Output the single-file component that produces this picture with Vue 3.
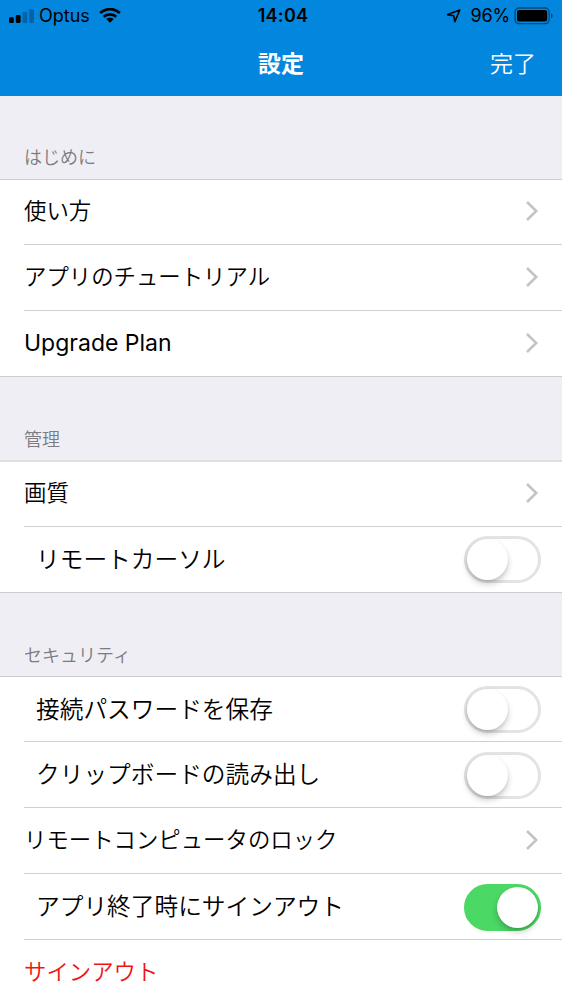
<script setup>
const groups = [
  {
    id: 'start',
    title: 'はじめに',
    rows: [
      { label: '使い方', type: 'link' },
      { label: 'アプリのチュートリアル', type: 'link' },
      { label: 'Upgrade Plan', type: 'link', latin: true },
    ],
  },
  {
    id: 'manage',
    title: '管理',
    rows: [
      { label: '画質', type: 'link' },
      { label: 'リモートカーソル', type: 'toggle', on: false },
    ],
  },
  {
    id: 'security',
    title: 'セキュリティ',
    rows: [
      { label: '接続パスワードを保存', type: 'toggle', on: false },
      { label: 'クリップボードの読み出し', type: 'toggle', on: false },
      { label: 'リモートコンピュータのロック', type: 'link' },
      { label: 'アプリ終了時にサインアウト', type: 'toggle', on: true },
      { label: 'サインアウト', type: 'danger' },
    ],
  },
]
</script>

<template>
  <div class="screen">
    <header class="header">
      <div class="status">
        <div class="side">
          <svg class="signal" width="26" height="16" viewBox="0 0 26 16">
            <rect x="0" y="9.3" width="4.8" height="5.7" rx="1.2" />
            <rect x="6.8" y="7" width="4.8" height="8" rx="1.2" />
            <rect class="dim" x="13.5" y="4" width="4.8" height="11" rx="1.2" />
            <rect class="dim" x="20.2" y="1" width="4.8" height="14" rx="1.2" />
          </svg>
          <span class="carrier">Optus</span>
          <svg class="wifi" width="22" height="16" viewBox="0 0 22 16">
            <path d="M1.2 5.1C6.8-.2 15.2-.2 20.8 5.1" />
            <path d="M4.7 8.8C8.4 5.5 13.6 5.5 17.3 8.8" />
            <path class="dot" d="M11 14.7 7.2 11.1C9.3 9.2 12.7 9.2 14.8 11.1Z" />
          </svg>
        </div>
        <span class="time">14:04</span>
        <div class="side right">
          <svg class="location" width="16" height="16" viewBox="0 0 16 16">
            <path d="M1.6 6.6 13.8 2 8.8 13.6 7.7 7.7Z" />
          </svg>
          <span class="percent">96%</span>
          <svg class="battery" width="40" height="18" viewBox="0 0 40 18">
            <rect class="shell" x="1" y="1" width="34.2" height="15.6" rx="4" />
            <rect x="3" y="3" width="30.2" height="11.6" rx="2" />
            <path class="tip" d="M37 6.2C39.2 7 39.2 10.6 37 11.4Z" />
          </svg>
        </div>
      </div>
      <nav class="nav">
        <h1 class="title">設定</h1>
        <button class="done">完了</button>
      </nav>
    </header>

    <main>
      <section v-for="g in groups" :key="g.id" :class="['group', g.id]">
        <h2 class="group-title">{{ g.title }}</h2>
        <ul class="list">
          <li v-for="r in g.rows" :key="r.label" :class="['row', r.type]">
            <span :class="['label', { latin: r.latin }]">{{ r.label }}</span>
            <svg v-if="r.type === 'link'" class="chevron" width="14" height="22" viewBox="0 0 14 22">
              <path d="M2 2 11.2 11 2 20" />
            </svg>
            <span v-else-if="r.type === 'toggle'" :class="['switch', { on: r.on }]">
              <span class="knob"></span>
            </span>
          </li>
        </ul>
      </section>
    </main>
  </div>
</template>

<style>
body {
  background: #fff;
  overflow: hidden;
}
</style>

<style scoped>
.screen {
  height: 999px;
  overflow: hidden;
  background: #efeef4;
  color: #000;
  font-family: Inter, "Noto Sans CJK JP", sans-serif;
}
.header {
  height: 96px;
  background: #0386de;
}
.status {
  display: grid;
  grid-template-columns: 1fr auto 1fr;
  align-items: center;
  height: 32px;
  padding: 0 8px 0 9px;
  font-size: 18px;
  line-height: 32px;
}
.side {
  display: flex;
  align-items: center;
}
.right {
  justify-content: flex-end;
}
.dim {
  opacity: 0.25;
}
.carrier {
  margin-left: 4px;
}
.wifi {
  margin-left: 9px;
}
.wifi path {
  fill: none;
  stroke: #000;
  stroke-width: 2.8;
}
.wifi .dot {
  fill: #000;
  stroke: none;
}
.time {
  padding-left: 3px;
  font-weight: 600;
  letter-spacing: 0.3px;
}
.location path {
  fill: none;
  stroke: #000;
  stroke-width: 1.6;
  stroke-linejoin: round;
}
.percent {
  margin: 0 4px 0 9px;
  letter-spacing: -0.2px;
}
.battery .shell {
  fill: none;
  stroke: #000;
  stroke-opacity: 0.45;
  stroke-width: 1.3;
}
.tip {
  opacity: 0.45;
}
.nav {
  display: grid;
  grid-template-columns: 1fr auto 1fr;
  align-items: center;
  height: 64px;
  padding: 0 26px;
}
.title {
  grid-column: 2;
  margin: 0;
  color: #fff;
  font-size: 23px;
  font-weight: 700;
  line-height: 64px;
}
.done {
  justify-self: end;
  padding: 0;
  border: 0;
  background: none;
  color: #fff;
  font-family: inherit;
  font-size: 23px;
  font-weight: 350;
  line-height: 64px;
}
.group-title {
  box-sizing: border-box;
  height: 83px;
  margin: 0;
  padding: 49px 24px 0;
  color: #7c7c81;
  font-size: 18px;
  font-weight: 350;
  line-height: 26px;
}
.manage .group-title,
.security .group-title {
  padding-top: 50px;
}
.list {
  margin: 0;
  padding: 0;
  list-style: none;
  background: #fff;
  border-top: 1px solid #cdccd1;
}
.manage .list {
  border-top: 2px solid #dfdfe3;
}
.row {
  display: flex;
  align-items: center;
  justify-content: space-between;
  box-sizing: border-box;
  height: 66px;
  margin-left: 24px;
  padding-right: 21px;
  border-bottom: 1px solid #d0d0d3;
}
.row:first-child {
  height: 65px;
}
.link:first-child {
  padding-bottom: 1px;
}
.row:last-child {
  margin-left: 0;
  padding-left: 24px;
  border-color: #cdccd1;
}
.label {
  padding-bottom: 1px;
  color: #000;
  font-size: 22.4px;
  font-weight: 350;
  line-height: 60px;
  white-space: nowrap;
}
.latin {
  font-size: 23px;
  font-weight: 400;
}
.toggle .label {
  padding: 1px 0 0 12px;
  font-size: 23.7px;
}
.danger .label {
  color: #f01414;
}
.chevron {
  margin: 0 2px 1px 0;
}
.chevron path {
  fill: none;
  stroke: #c4c4c8;
  stroke-width: 2.6;
}
.switch {
  display: flex;
  box-sizing: border-box;
  width: 77px;
  height: 47px;
  border: 3px solid #e3e3e4;
  border-radius: 24px;
  background: #fff;
}
.security .toggle:not(:first-child) .switch {
  margin-top: 1px;
}
.knob {
  width: 41px;
  height: 41px;
  border-radius: 50%;
  background: #fff;
  box-shadow: 0 4px 6px rgba(0, 0, 0, 0.2), 0 1px 2px rgba(0, 0, 0, 0.1);
}
.switch.on {
  justify-content: flex-end;
  border-color: #4bd864;
  background: #4bd864;
}
</style>
